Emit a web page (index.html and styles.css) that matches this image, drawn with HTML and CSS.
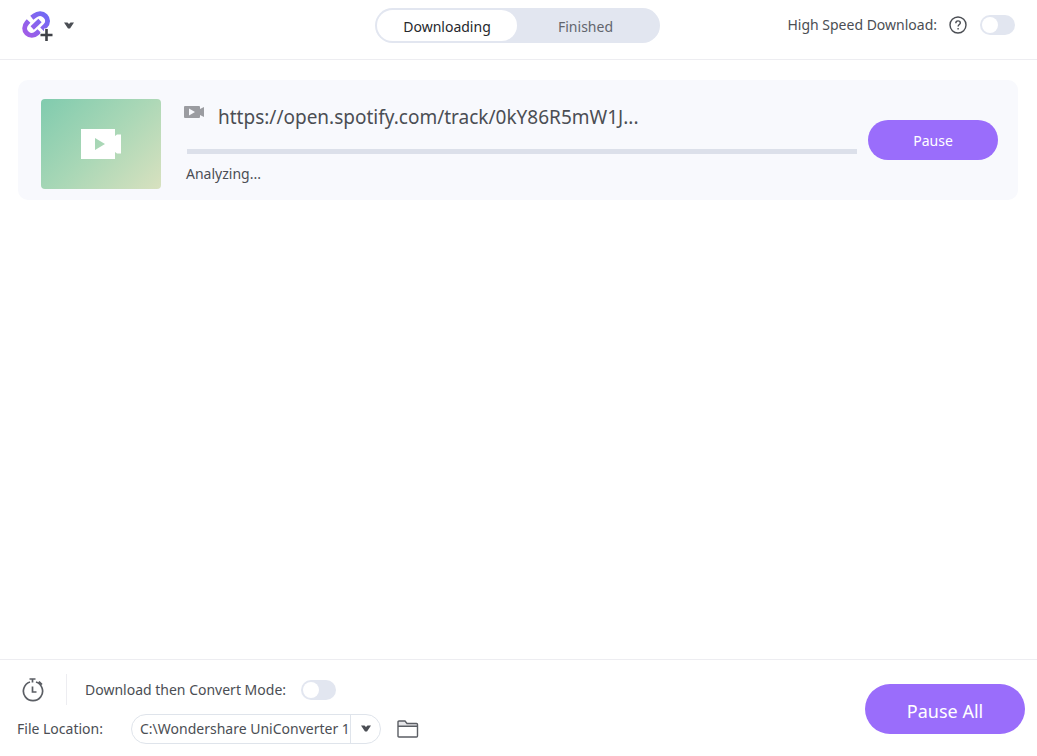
FILE: index.html
```html
<!DOCTYPE html>
<html lang="en">
<head>
<meta charset="utf-8">
<meta name="viewport" content="width=device-width, initial-scale=1">
<title>Downloader</title>
<link rel="stylesheet" href="styles.css">
</head>
<body>
<header class="topbar">
  <button class="icon-button add-link" type="button" aria-label="Add link">
    <svg class="link-icon" viewBox="0 0 32 34" aria-hidden="true">
      <defs>
        <linearGradient id="link-tint" gradientUnits="userSpaceOnUse" x1="2" y1="28" x2="28" y2="4">
          <stop offset="0" stop-color="#a45be6"/>
          <stop offset="1" stop-color="#6a6cf6"/>
        </linearGradient>
      </defs>
      <g fill="none" stroke="url(#link-tint)" stroke-width="5">
        <path d="M9.800 9.800 12.500 7.700C16 4.900 20.500 5 23.400 7.900S26.200 15 23.300 18L20 21.300"/>
        <path d="M6.600 13 5 14.700C2 18 2 22.500 4.800 25.200S12 28 15 25.200L17.300 23"/>
        <path d="M10.200 20 18 12.600" stroke-width="4.800"/>
      </g>
      <path d="M24.500 20.500v12M18 27h13" fill="none" stroke="#fff" stroke-width="5"/>
      <path d="M24.500 21v12M18.500 27h12" fill="none" stroke="#3f4247" stroke-width="2.600"/>
    </svg>
    <svg class="caret" viewBox="0 0 10 7" aria-hidden="true"><path d="M0 .5h3.500L5 2 6.500.5H10L6 6.500H4z"/></svg>
  </button>
  <nav class="tabs" aria-label="Downloads">
    <button class="tab tab-active" type="button">Downloading</button>
    <button class="tab" type="button">Finished</button>
  </nav>
  <div class="speed">
    <label for="speed">High Speed Download:</label>
    <button class="icon-button help" type="button" aria-label="Help">
      <svg class="help-icon" viewBox="0 0 18 18" fill="none" stroke="#4b4e54" stroke-width="1.4" aria-hidden="true">
        <circle cx="9" cy="9" r="8"/>
        <path d="M6.800 7.200C6.800 5.600 7.700 4.900 9 4.900s2.300.8 2.300 2.100c0 1.500-2.200 1.600-2.200 3.600M9.100 12v1.500"/>
      </svg>
    </button>
    <input class="switch" id="speed" type="checkbox" role="switch">
  </div>
</header>

<main class="list">
  <article class="item">
    <div class="thumb">
      <svg class="thumb-icon" viewBox="0 0 40 30" aria-hidden="true">
        <path fill="#fff" fill-rule="evenodd" d="M0 0h34v7l2-1.500h4v19h-4l-2-1.500v7H0zM14 9v12l10-6z"/>
      </svg>
    </div>
    <div class="details">
      <div class="title-row">
        <svg class="type-icon" viewBox="0 0 20 12" aria-hidden="true">
          <path fill="#9b9ca1" fill-rule="evenodd" d="M1 0h14q1 0 1 1v2l4-2v10l-4-2v2q0 1-1 1H1q-1 0-1-1V1q0-1 1-1zM5 2.500v7l6-3.500z"/>
        </svg>
        <h1 class="title">https://open.spotify.com/track/0kY86R5mW1J...</h1>
      </div>
      <progress class="bar" value="0" max="100" aria-label="Download progress"></progress>
      <p class="status">Analyzing...</p>
    </div>
    <button class="pill" type="button">Pause</button>
  </article>
</main>

<footer class="bottombar">
  <div class="options">
    <div class="row">
      <button class="icon-button timer" type="button" aria-label="Schedule">
        <svg class="timer-icon" viewBox="0 0 22 24" fill="none" stroke="#5b5e64" stroke-width="1.7" aria-hidden="true">
          <path d="M14 4A9.600 9.600 0 1 1 8 4M7.500 1h6M10.500 1v3.500M17 3.500l3 3M10.500 8.500v5.500h4"/>
        </svg>
      </button>
      <label class="convert-label" for="convert">Download then Convert Mode:</label>
      <input class="switch" id="convert" type="checkbox" role="switch">
    </div>
    <div class="row">
      <label class="location-label" for="location">File Location:</label>
      <div class="select-box">
        <select class="select" id="location">
          <option>C:\Wondershare UniConverter 1</option>
        </select>
        <svg class="caret" viewBox="0 0 10 7" aria-hidden="true"><path d="M0 .5h3.500L5 2 6.500.5H10L6 6.500H4z"/></svg>
      </div>
      <button class="icon-button folder" type="button" aria-label="Open folder">
        <svg class="folder-icon" viewBox="0 0 22 18" fill="none" stroke="#5b5e64" stroke-width="1.4" aria-hidden="true">
          <path fill="#e6e6e9" stroke="none" d="M1 1h7l2 2.500h10V6H1z"/>
          <path d="M1 16V2q0-1 1-1h6l2 2.500h9.500q1 0 1 1V16q0 1-1 1H2q-1 0-1-1zM1 6.300h19.500"/>
        </svg>
      </button>
    </div>
  </div>
  <button class="pill pill-large" type="button">Pause All</button>
</footer>
</body>
</html>
```
FILE: styles.css
```css
* {
  box-sizing: border-box;
}

body {
  margin: 0;
  min-height: 100vh;
  display: flex;
  flex-direction: column;
  background: #fff;
  color: #4b4e54;
  font: 14px/20px "Noto Sans", "Open Sans", sans-serif;
}

button,
select {
  font: inherit;
  color: inherit;
}

button {
  border: 0;
  padding: 0;
  background: none;
  cursor: pointer;
}

svg {
  display: block;
}

.icon-button {
  display: flex;
  align-items: center;
}

.topbar {
  display: grid;
  grid-template-columns: 1fr auto 1fr;
  align-items: start;
  padding: 8px 22px 16px 20px;
  border-bottom: 1px solid #ededf1;
}

.add-link {
  justify-self: start;
  gap: 10px;
  padding-left: 2px;
}

.link-icon {
  width: 32px;
  height: 34px;
}

.caret {
  width: 10px;
  height: 7px;
  fill: #4b4e54;
}

.tabs {
  display: grid;
  grid-template-columns: 140px 1fr;
  width: 285px;
  height: 35px;
  padding: 2px 6px 2px 2px;
  border-radius: 18px;
  background: #e2e6f0;
}

.tab {
  border-radius: 16px;
  padding-top: 2px;
  color: #62656d;
}

.tab-active {
  background: #fff;
  color: #26282c;
}

.speed {
  display: flex;
  justify-content: flex-end;
  align-items: center;
  height: 34px;
}

.help {
  margin: 0 13px 0 12px;
}

.help-icon {
  width: 18px;
  height: 18px;
}

.switch {
  appearance: none;
  display: flex;
  flex: none;
  align-items: center;
  width: 35px;
  height: 20px;
  margin: 0;
  padding: 0 2px;
  border-radius: 10px;
  background: #e2e6f0;
  cursor: pointer;
}

.switch::before {
  content: "";
  width: 16px;
  height: 16px;
  border-radius: 50%;
  background: #fff;
}

.switch:checked {
  justify-content: flex-end;
  background: #9a6dfb;
}

.list {
  flex: 1;
  padding: 20px 19px 20px 18px;
}

.item {
  display: flex;
  align-items: center;
  min-height: 120px;
  padding: 0 20px 0 23px;
  border-radius: 10px;
  background: #f8f9fd;
}

.thumb {
  display: grid;
  place-items: center;
  width: 120px;
  height: 90px;
  margin-top: 8px;
  border-radius: 4px;
  background: linear-gradient(135deg, #80cbae, #a9d7b6 50%, #d8e1bf);
}

.thumb-icon {
  width: 40px;
  height: 30px;
}

.details {
  flex: 1;
  min-width: 0;
  margin: 6px 11px 0 23px;
}

.title-row {
  display: flex;
  align-items: flex-start;
  gap: 14px;
}

.type-icon {
  flex: none;
  width: 20px;
  height: 12px;
  margin-top: 3px;
}

.title {
  margin: 0;
  font-size: 19px;
  line-height: 28px;
  font-weight: 400;
}

.bar {
  appearance: none;
  display: block;
  width: calc(100% - 3px);
  height: 5px;
  margin: 18px 0 10px 3px;
  border: 0;
  background: #dce0ea;
}

.bar::-webkit-progress-bar {
  background: #dce0ea;
}

.bar::-webkit-progress-value {
  background: #9a6dfb;
}

.status {
  margin: 0 0 0 2px;
}

.pill {
  width: 130px;
  height: 40px;
  padding-top: 2px;
  border-radius: 20px;
  background: #9a6dfb;
  color: #fff;
}

.pill-large {
  width: 160px;
  height: 50px;
  padding-top: 4px;
  border-radius: 25px;
  font-size: 18px;
}

.bottombar {
  display: flex;
  justify-content: space-between;
  align-items: center;
  padding: 14px 12px 12px 17px;
  border-top: 1px solid #ededf1;
}

.options {
  display: grid;
  gap: 8px;
}

.row {
  display: flex;
  align-items: center;
  height: 31px;
  white-space: nowrap;
}

.timer {
  width: 50px;
  height: 31px;
  padding-left: 5px;
  border-right: 1px solid #ededf1;
}

.timer-icon {
  width: 22px;
  height: 24px;
}

.convert-label {
  width: 234px;
  padding-left: 18px;
}

.location-label {
  width: 114px;
}

.select-box {
  display: grid;
  grid-template-columns: 1fr 30px;
  align-items: center;
  width: 250px;
  height: 30px;
}

.select {
  grid-area: 1 / 1 / 2 / 3;
  appearance: none;
  width: 100%;
  height: 30px;
  padding: 0 30px 0 8px;
  border: 1px solid #dfe4eb;
  border-radius: 15px;
  background: linear-gradient(#dfe4eb, #dfe4eb) right 29px top / 1px 100% no-repeat #fff;
}

.select-box .caret {
  grid-area: 1 / 2;
  justify-self: center;
  pointer-events: none;
}

.folder {
  margin-left: 16px;
}

.folder-icon {
  width: 22px;
  height: 18px;
}
```
